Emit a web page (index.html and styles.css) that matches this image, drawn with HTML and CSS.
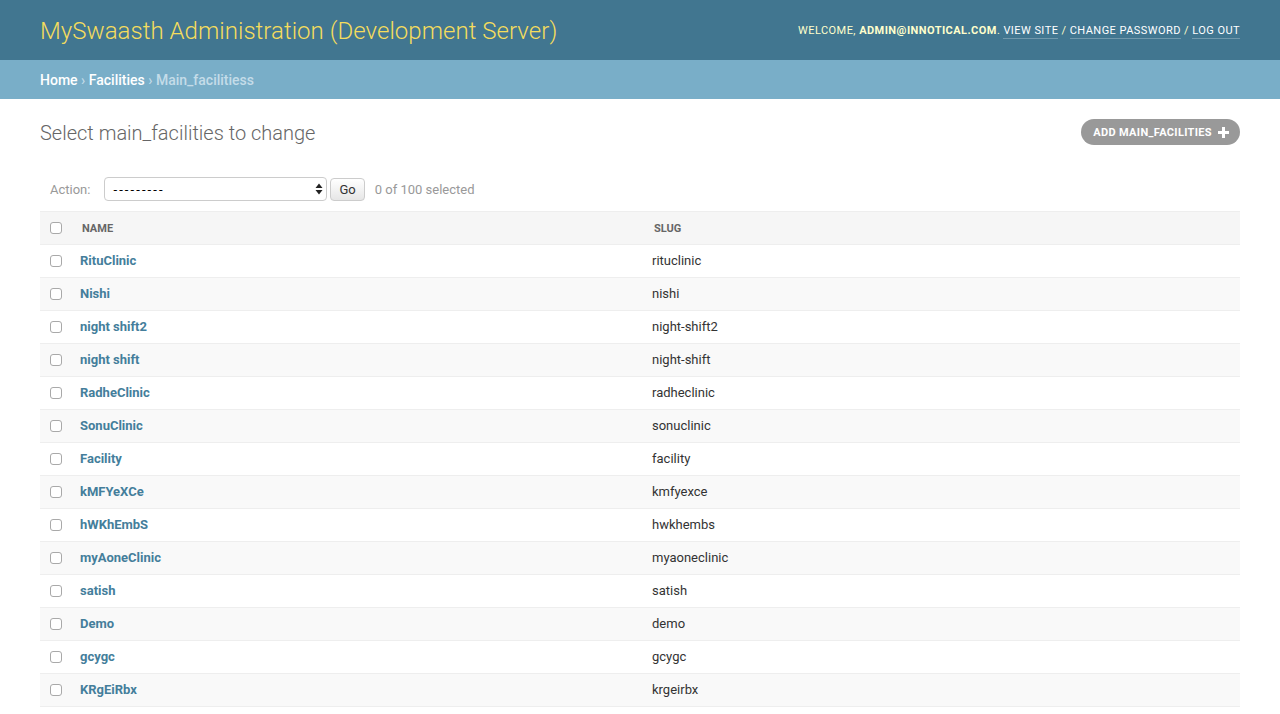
FILE: index.html
```html
<!DOCTYPE html>
<html lang="en">
<head>
<meta charset="utf-8">
<title>Select main_facilities to change</title>
<link rel="stylesheet" href="styles.css">
</head>
<body>
<header class="header">
  <h1 class="brand">MySwaasth Administration (Development Server)</h1>
  <div class="user-tools">
    Welcome, <strong>admin@innotical.com</strong>.
    <a href="#">View site</a> /
    <a href="#">Change password</a> /
    <a href="#">Log out</a>
  </div>
</header>
<nav class="breadcrumbs">
  <a href="#">Home</a> › <a href="#">Facilities</a> › Main_facilitiess
</nav>
<main class="content">
  <div class="title-row">
    <h1 class="page-title">Select main_facilities to change</h1>
    <a class="addlink" href="#">Add main_facilities
      <svg class="plus" width="11" height="11" viewBox="0 0 11 11"><path d="M4 0h3v4h4v3H7v4H4V7H0V4h4z" fill="#fff"/></svg>
    </a>
  </div>
  <div class="actions">
    <label class="action-label">Action:</label>
    <span class="select-wrap">
      <select class="action-select"><option>---------</option></select>
      <svg class="select-arrows" width="8" height="12" viewBox="0 0 8 12"><path d="M4 0.5L7.5 5H0.5z M4 11.5L0.5 7H7.5z" fill="#222"/></svg>
    </span>
    <button class="go">Go</button>
    <span class="counter">0 of 100 selected</span>
  </div>
  <table class="result-list">
    <thead>
      <tr>
        <th class="col-check"><span class="cb"></span></th>
        <th class="col-name"><span class="text">Name</span></th>
        <th class="col-slug"><span class="text">Slug</span></th>
      </tr>
    </thead>
    <tbody>
      <tr class="row1"><td class="col-check"><span class="cb"></span></td><th><a href="#">RituClinic</a></th><td>rituclinic</td></tr>
      <tr class="row2"><td class="col-check"><span class="cb"></span></td><th><a href="#">Nishi</a></th><td>nishi</td></tr>
      <tr class="row1"><td class="col-check"><span class="cb"></span></td><th><a href="#">night shift2</a></th><td>night-shift2</td></tr>
      <tr class="row2"><td class="col-check"><span class="cb"></span></td><th><a href="#">night shift</a></th><td>night-shift</td></tr>
      <tr class="row1"><td class="col-check"><span class="cb"></span></td><th><a href="#">RadheClinic</a></th><td>radheclinic</td></tr>
      <tr class="row2"><td class="col-check"><span class="cb"></span></td><th><a href="#">SonuClinic</a></th><td>sonuclinic</td></tr>
      <tr class="row1"><td class="col-check"><span class="cb"></span></td><th><a href="#">Facility</a></th><td>facility</td></tr>
      <tr class="row2"><td class="col-check"><span class="cb"></span></td><th><a href="#">kMFYeXCe</a></th><td>kmfyexce</td></tr>
      <tr class="row1"><td class="col-check"><span class="cb"></span></td><th><a href="#">hWKhEmbS</a></th><td>hwkhembs</td></tr>
      <tr class="row2"><td class="col-check"><span class="cb"></span></td><th><a href="#">myAoneClinic</a></th><td>myaoneclinic</td></tr>
      <tr class="row1"><td class="col-check"><span class="cb"></span></td><th><a href="#">satish</a></th><td>satish</td></tr>
      <tr class="row2"><td class="col-check"><span class="cb"></span></td><th><a href="#">Demo</a></th><td>demo</td></tr>
      <tr class="row1"><td class="col-check"><span class="cb"></span></td><th><a href="#">gcygc</a></th><td>gcygc</td></tr>
      <tr class="row2"><td class="col-check"><span class="cb"></span></td><th><a href="#">KRgEiRbx</a></th><td>krgeirbx</td></tr>
    </tbody>
  </table>
</main>
</body>
</html>
```
FILE: styles.css
```css
* { box-sizing: border-box; }
html, body { margin: 0; padding: 0; }
body {
  font-family: Roboto, "Liberation Sans", Arial, sans-serif;
  font-size: 14px;
  color: #333;
  background: #fff;
}
a { text-decoration: none; color: #447e9b; }

.header {
  display: flex;
  justify-content: space-between;
  align-items: center;
  height: 60px;
  padding: 11px 40px 9px;
  background: #417690;
  line-height: 40px;
  color: #ffc;
}
.brand {
  margin: 0;
  font-weight: 300;
  font-size: 24px;
  letter-spacing: 0.04px;
  color: #f5dd5d;
}
.user-tools {
  font-size: 11px;
  font-weight: 400;
  letter-spacing: 0.45px;
  text-transform: uppercase;
  color: #ffc;
  white-space: nowrap;
}
.user-tools strong { font-weight: 700; }
.user-tools a {
  color: #fff;
  border-bottom: 1px solid rgba(255,255,255,0.25);
  padding-bottom: 1px;
}

.breadcrumbs {
  background: #79aec8;
  padding: 11px 40px 9px;
  font-size: 14px;
  line-height: 19px;
  color: #c4dce8;
  font-weight: 500;
}
.breadcrumbs a { color: #fff; }

.content { padding: 20px 40px; }

.title-row {
  display: flex;
  justify-content: space-between;
  align-items: flex-start;
  margin-bottom: 20px;
}
.page-title {
  margin: 0;
  font-weight: 300;
  font-size: 20px;
  line-height: 28px;
  color: #666;
}
.addlink {
  display: inline-flex;
  align-items: center;
  height: 26px;
  padding: 0 11px 0 12px;
  background: #999;
  color: #fff;
  border-radius: 15px;
  font-size: 11px;
  font-weight: 700;
  letter-spacing: 0.35px;
  text-transform: uppercase;
}
.plus { margin-left: 6px; }

.actions {
  display: flex;
  align-items: center;
  height: 44px;
  padding: 10px;
  color: #999;
  font-size: 13px;
}
.action-label { color: #999; }
.select-wrap {
  position: relative;
  display: inline-block;
  margin-left: 14px;
  height: 24px;
}
.action-select {
  appearance: none;
  -webkit-appearance: none;
  width: 223px;
  height: 24px;
  border: 1px solid #ccc;
  border-radius: 4px;
  background: #fff;
  color: #000;
  font-family: Roboto, "Liberation Sans", Arial, sans-serif;
  font-size: 13px;
  letter-spacing: 2.1px;
  padding: 0 0 0 8px;
  margin: 0;
}
.select-arrows {
  position: absolute;
  right: 4px;
  top: 6px;
  pointer-events: none;
}
.go {
  height: 23px;
  margin-left: 3px;
  padding: 0 8px;
  font-family: Roboto, "Liberation Sans", Arial, sans-serif;
  font-size: 13px;
  color: #333;
  border: 1px solid #ccc;
  border-radius: 4px;
  background: linear-gradient(#fff, #f0f0f0 60%, #e6e6e6);
}
.counter { margin-left: 10px; color: #999; font-size: 13px; }

.result-list {
  width: 1200px;
  border-collapse: collapse;
  table-layout: fixed;
}
.col-check { width: 32px; }
.col-name { width: 572px; }
.result-list thead th {
  height: 33px;
  padding: 0;
  background: #f6f6f6;
  border-top: 1px solid #eee;
  border-bottom: 1px solid #eee;
  text-align: left;
  font-size: 11px;
  font-weight: 700;
  color: #666;
  text-transform: uppercase;
  vertical-align: middle;
}
.result-list thead th .text { display: block; padding: 0 10px; }
.result-list thead th.col-check { padding-left: 10px; }
.result-list td, .result-list tbody th {
  height: 33px;
  padding: 8px;
  font-size: 13px;
  line-height: 16px;
  border-bottom: 1px solid #eee;
  text-align: left;
  vertical-align: top;
}
.result-list tbody th { font-weight: 700; }
.result-list tbody td.col-check { padding: 10px 0 0 10px; }
.row1 { background: #fff; }
.row2 { background: #f9f9f9; }

.cb {
  display: block;
  width: 12px;
  height: 12px;
  border: 1px solid #a9a9a9;
  border-radius: 3px;
  background: #fff;
}
```
